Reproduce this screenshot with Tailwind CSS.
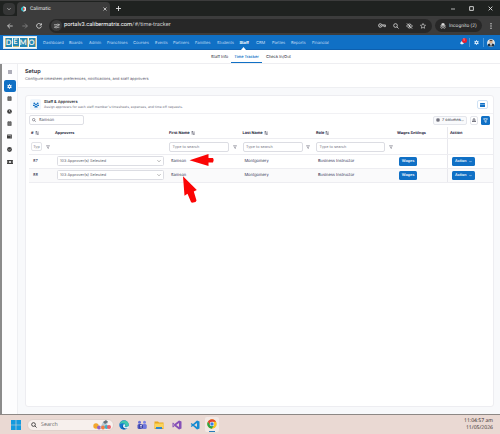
<!DOCTYPE html>
<html lang="en">
<head>
  <meta charset="UTF-8" />
  <meta name="viewport" content="width=device-width, initial-scale=1.0" />
  <title>Calimatic</title>
  <script src="https://cdn.jsdelivr.net/npm/@tailwindcss/browser@4"></script>
</head>
<body class="relative w-[500px] h-[434px] overflow-hidden flex flex-col bg-[#f8f9fb] font-[Inter,sans-serif] text-[4px] leading-none text-[#2e2e4d] whitespace-nowrap [text-rendering:geometricPrecision]">

  <!-- Shared icons -->
  <svg class="hidden">
    <symbol id="funnel" viewBox="0 0 10 10"><path d="M1 1.5h8L6.2 5v3.8L3.9 7.6V5z" fill="none" stroke="currentColor" stroke-width="1.3" stroke-linejoin="round"/></symbol>
    <symbol id="sort" viewBox="0 0 10 10"><path d="M3 9V1M1 3l2-2 2 2M7.5 1v8M5.5 7l2 2 2-2" fill="none" stroke="currentColor" stroke-width="1.3"/></symbol>
    <symbol id="chev" viewBox="0 0 10 10"><path d="M1 3l4 4 4-4" fill="none" stroke="currentColor" stroke-width="1.6"/></symbol>
    <symbol id="lens" viewBox="0 0 10 10"><path d="M6.5 6.5l2.8 2.8M7.3 4.2a3.1 3.1 0 1 1-6.2 0a3.1 3.1 0 0 1 6.2 0z" fill="none" stroke="currentColor" stroke-width="1.3"/></symbol>
    <symbol id="cal" viewBox="0 0 10 10"><path d="M2 1.200h1V.3h1v.9h2V.3h1v.9h1q1 0 1 1v6.300q0 1-1 1H2q-1 0-1-1V2.200q0-1 1-1z" fill="currentColor"/><path d="M2 3.600h6M2.500 5.500h5M2.500 7.500h5" stroke="#fff" stroke-width=".6"/></symbol>
    <symbol id="gear" viewBox="0 0 10 10"><circle cx="5" cy="5" r="2.600" fill="none" stroke="currentColor" stroke-width="2.2"/><path d="M5 .3v1.500M5 8.200v1.500M.9 2.600l1.300.8M7.800 6.600l1.300.8M.9 7.400l1.300-.8M7.800 3.400l1.300-.8" stroke="currentColor" stroke-width="2"/></symbol>
  </svg>

  <!-- Tab strip -->
  <div class="h-4 shrink-0 bg-[#1f2220] border-t border-[#3c3c3c] flex items-center text-[#e3e3e3]">
    <div class="ml-[3px] w-3 h-3 rounded-[4px] bg-[#353636] flex items-center justify-center"><svg class="w-1 h-1"><use href="#chev"/></svg></div>
    <div class="ml-[2px] mt-px w-[93px] h-[14px] rounded-t-[4px] bg-[#3c3c3c] flex items-center pl-[4px] pr-[3px]">
      <svg class="w-[5px] h-[6px]" viewBox="0 0 10 12"><path d="M5 0L0 4v4l5 4z" fill="#22b8c5"/><path d="M5 0l5 3v6l-5 3z" fill="#e8eef0"/><path d="M4 4h3v4H4z" fill="#d64545"/></svg>
      <span class="ml-[4px] text-[5px] font-[Roboto,sans-serif]">Calimatic</span>
      <svg class="ml-auto w-1 h-1" viewBox="0 0 8 8"><path d="M1 1l6 6M7 1L1 7" stroke="currentColor" stroke-width="1.500"/></svg>
    </div>
    <svg class="ml-[6px] w-[5px] h-[5px]" viewBox="0 0 8 8"><path d="M4 0v8M0 4h8" stroke="currentColor" stroke-width="1.400"/></svg>
    <div class="ml-auto mr-[7px] flex items-center gap-[14px]">
      <svg class="w-1 h-1" viewBox="0 0 8 8"><path d="M0 4h8" stroke="currentColor" stroke-width="1.500"/></svg>
      <svg class="w-[5px] h-[5px]" viewBox="0 0 8 8"><path d="M1 1h6v6H1z" fill="none" stroke="currentColor" stroke-width="1.400"/></svg>
      <svg class="w-[5px] h-[5px]" viewBox="0 0 8 8"><path d="M1 1l6 6M7 1L1 7" stroke="currentColor" stroke-width="1.400"/></svg>
    </div>
  </div>

  <!-- Address bar -->
  <div class="h-[19px] shrink-0 bg-[#3c3c3c] flex items-center text-[#dedede]">
    <svg class="ml-[7px] w-[6px] h-[6px]" viewBox="0 0 10 10"><path d="M9.500 5H1M5 1L1 5l4 4" fill="none" stroke="currentColor" stroke-width="1.300"/></svg>
    <svg class="ml-[9px] w-[6px] h-[6px] text-[#888]" viewBox="0 0 10 10"><path d="M.5 5H9M5 1l4 4-4 4" fill="none" stroke="currentColor" stroke-width="1.300"/></svg>
    <svg class="ml-[8px] w-[6px] h-[6px]" viewBox="0 0 10 10"><path d="M8.700 3A4 4 0 1 0 9 5.500M9 .5v3H6" fill="none" stroke="currentColor" stroke-width="1.400"/></svg>
    <div class="ml-[7px] w-[383px] h-[14px] rounded-full bg-[#272727] flex items-center pl-[2px] pr-[6px]">
      <div class="w-[11px] h-[11px] rounded-full bg-[#3c3c3c] flex items-center justify-center"><svg class="w-[6px] h-[6px]" viewBox="0 0 10 10"><path d="M0 3h5M9 7H5M7 3h3M0 7h2" stroke="currentColor" stroke-width="1.200"/><circle cx="6.500" cy="3" r="1.400" fill="none" stroke="currentColor"/><circle cx="3.500" cy="7" r="1.400" fill="none" stroke="currentColor"/></svg></div>
      <span class="ml-[2px] pt-px text-[5.700px] text-white font-[Roboto,sans-serif]">portalv3.calibermatrix.com<span class="text-[#c9c9c9]">/#/time-tracker</span></span>
      <div class="ml-auto flex items-center gap-[7px]">
        <svg class="w-[8px] h-[5px]" viewBox="0 0 14 8"><circle cx="4" cy="4" r="3" fill="none" stroke="currentColor" stroke-width="1.500"/><circle cx="4" cy="4" r="1" fill="currentColor"/><path d="M7 3h6v3h-2V4M9 3v3" fill="none" stroke="currentColor" stroke-width="1.300"/></svg>
        <svg class="w-[6px] h-[6px]"><use href="#lens"/></svg>
        <svg class="w-[7px] h-[6px]" viewBox="0 0 12 10"><path d="M1 5q5-7 10 0q-5 7-10 0zM1.500.5l9 9" fill="none" stroke="currentColor" stroke-width="1.300"/><circle cx="6" cy="5" r="1.600" fill="currentColor"/></svg>
        <svg class="w-[6px] h-[6px]" viewBox="0 0 10 10"><path d="M5 .7l1.300 2.800 3 .3-2.200 2 .6 3L5 7.300 2.300 8.800l.6-3L.7 3.800l3-.3z" fill="none" stroke="currentColor"/></svg>
      </div>
    </div>
    <div class="ml-[3px] w-[47px] h-[13px] rounded-full bg-[#272727] flex items-center pl-[5px]">
      <svg class="w-[6px] h-[6px]" viewBox="0 0 10 10"><path d="M2.500 4L3.300.7h3.400L7.500 4M.3 4.700h9.400" fill="currentColor" stroke="currentColor"/><circle cx="2.800" cy="7.300" r="1.600" fill="none" stroke="currentColor"/><circle cx="7.200" cy="7.300" r="1.600" fill="none" stroke="currentColor"/></svg>
      <span class="ml-[3px] pt-px text-[4.900px] font-[Roboto,sans-serif]">Incognito (2)</span>
    </div>
    <svg class="ml-[8px] w-[2px] h-[6px]" viewBox="0 0 2 6" fill="currentColor"><circle cx="1" cy=".8" r=".7"/><circle cx="1" cy="3" r=".7"/><circle cx="1" cy="5.200" r=".7"/></svg>
  </div>

  <!-- Main nav -->
  <div class="relative h-[15px] shrink-0 bg-[#1070c5] border-b border-[#0d5fae] flex items-center pl-[3px] pt-px text-[#c3def5] text-[4px]">
    <div class="w-[34px] h-[13px] bg-[#f5fafc] border border-[#d7e7ef] flex items-center justify-center gap-px text-[7.500px] font-bold text-[#f2f1e8] font-[Lato,sans-serif]">
      <span class="w-[7px] h-[9px] bg-[#2389b5] flex items-center justify-center border-l border-[#c2b476]">D</span>
      <span class="w-[6px] h-[9px] bg-[#2389b5] flex items-center justify-center border-b border-[#c2b476]">E</span>
      <span class="w-[8px] h-[9px] bg-[#2389b5] flex items-center justify-center border-r border-[#c2b476]">M</span>
      <span class="w-[7px] h-[9px] bg-[#2389b5] flex items-center justify-center border-r border-[#c2b476]">O</span>
    </div>
    <nav class="ml-[6px] flex">
      <span class="w-[26px]">Dashboard</span>
      <span class="w-[20px]">Boards</span>
      <span class="w-[18px]">Admin</span>
      <span class="w-[26px]">Franchises</span>
      <span class="w-[22px]">Courses</span>
      <span class="w-[18px]">Events</span>
      <span class="w-[22px]">Partners</span>
      <span class="w-[22px]">Families</span>
      <span class="w-[22.500px]">Students</span>
      <span class="w-[16.500px] font-bold text-white">Staff</span>
      <span class="w-[16px]">CRM</span>
      <span class="w-[19px]">Parties</span>
      <span class="w-[21px]">Reports</span>
      <span>Financial</span>
    </nav>
    <svg class="absolute left-[241px] bottom-[-1px] w-[5px] h-[3px]" viewBox="0 0 5 3"><path d="M0 3L2.500 0 5 3z" fill="#fff"/></svg>
    <div class="ml-auto mr-[5px] flex items-center">
      <div class="relative w-[6px] h-[7px]">
        <svg class="absolute left-0 top-[2px] w-1 h-1" viewBox="0 0 8 8"><path d="M0 6l1-1V3q3-5 6 0v2l1 1zM3 7h2v1H3z" fill="#e5f0fa"/></svg>
        <span class="absolute left-[1.500px] top-[-1px] w-[5px] h-[5px] rounded-full bg-[#ed1c2e] text-white text-[3.500px] flex items-center justify-center">1</span>
      </div>
      <div class="ml-[3px] w-px h-[9px] bg-[#4a96d7]"></div>
      <svg class="mx-[4px] w-[5px] h-[5px] text-[#e0effc]"><use href="#gear"/></svg>
      <div class="w-px h-[9px] bg-[#4a96d7]"></div>
      <svg class="ml-[3px] w-[8px] h-[8px] rounded-full" viewBox="0 0 16 16"><circle cx="8" cy="8" r="8" fill="#dce3e8"/><path d="M2 15V10l4-1h4l4 1v5z" fill="#26313f"/><circle cx="8" cy="5.500" r="3.500" fill="#d8ab86"/><path d="M4.500 4Q8-2 11.500 4z" fill="#544034"/><path d="M6 9h4l-2 6z" fill="#fff"/></svg>
    </div>
  </div>

  <!-- Sub nav -->
  <div class="h-[14px] shrink-0 bg-white border-b border-[#eeeef1] flex items-stretch pl-[211px] text-[4px] text-[#222230]">
    <span class="w-[20px] flex items-center">Staff Info</span>
    <span class="w-[31px] flex items-center justify-center pt-px border-b border-[#1070c5] text-[#1070c5] font-semibold text-[3.900px]">Time Tracker</span>
    <span class="ml-[4px] flex items-center">Check In/Out</span>
  </div>

  <div class="flex-1 min-h-0 flex border-l-2 border-[#8b8b8b]">
    <!-- Sidebar -->
    <div class="w-[16px] shrink-0 bg-[#fdfdfe] border-r border-[#eeeff2] flex flex-col items-center text-[#3f3f3f]">
      <div class="h-[16px] flex items-center"><svg class="w-[4px] h-[4px]" viewBox="0 0 8 8"><path d="M0 1h8M0 3h8M0 5h8M0 7h8" stroke="#777788" stroke-width="1.200"/></svg></div>
      <div class="w-[12px] h-[12px] rounded-[2px] bg-[#1070c5] text-white flex items-center justify-center"><svg class="w-[5px] h-[5px]"><use href="#gear"/></svg></div>
      <div class="h-[12.800px] flex items-center"><svg class="w-[5px] h-[5px]"><use href="#cal"/></svg></div>
      <div class="h-[12.800px] flex items-center"><svg class="w-[5px] h-[5px]" viewBox="0 0 10 10"><circle cx="5" cy="5" r="4.700" fill="currentColor"/><path d="M5 2v3l2 1.500" fill="none" stroke="#fff"/></svg></div>
      <div class="h-[12.800px] flex items-center"><svg class="w-[5px] h-[5px]"><use href="#cal"/></svg></div>
      <div class="h-[12.800px] flex items-center"><svg class="w-[5px] h-[5px]" viewBox="0 0 10 10"><rect y="1" width="10" height="8" rx="1" fill="currentColor"/><path d="M1 3h8M6 6h4" stroke="#fff" stroke-width=".8"/></svg></div>
      <div class="h-[12.800px] flex items-center"><svg class="w-[5px] h-[5px]" viewBox="0 0 10 10"><circle cx="5" cy="5" r="4.800" fill="currentColor"/><path d="M2.800 5l1.700 1.700 3-3.200" fill="none" stroke="#fff" stroke-width="1.100"/></svg></div>
      <div class="h-[12.800px] flex items-center"><svg class="w-[6px] h-[4px]" viewBox="0 0 12 8"><rect width="12" height="8" rx="1" fill="currentColor"/><circle cx="6" cy="4" r="2" fill="#fff"/><path d="M1.500 2v4M10.500 2v4" stroke="#fff" stroke-width=".7"/></svg></div>
    </div>

    <div class="flex-1 min-w-0 flex flex-col">
      <!-- Page heading -->
      <div class="h-[24px] shrink-0 bg-white border-b border-[#eeeff2] pl-[7px] pt-[5px]">
        <h1 class="text-[5.500px] leading-[7px] font-semibold text-[#1d1d2c]">Setup</h1>
        <p class="text-[3.900px] leading-[5px] text-[#646472]">Configure timesheet preferences, notifications, and staff approvers</p>
      </div>

      <!-- Card -->
      <div class="mt-[7px] ml-[7px] mr-[6px] mb-[7px] flex-1 bg-white border border-[#ededf1] rounded-[3px] flex flex-col">
        <div class="h-[18px] shrink-0 border-b border-[#f1f1f4] flex items-center pl-[4px] pr-[5px]">
          <div class="w-[11px] h-[11px] rounded-[2px] bg-[#f0f6fc] flex items-center justify-center">
            <svg class="w-[6px] h-[6px]" viewBox="0 0 12 12" fill="#1070c5"><circle cx="2.500" cy="2.800" r="1.600"/><circle cx="9.500" cy="2.800" r="1.600"/><circle cx="6" cy="4.800" r="1.900"/><path d="M0 8V5.500h3.500L4 7 2.800 8zM12 8V5.500H8.500L8 7l1.200 1zM2.500 11q0-3.500 3.500-3.500T9.500 11z"/></svg>
          </div>
          <div class="ml-[3px]">
            <h2 class="text-[3.950px] leading-[6px] font-semibold text-[#1d1d2c]">Staff &amp; Approvers</h2>
            <p class="text-[3.370px] leading-[5px] text-[#6c6c7a]">Assign approvers for each staff member's timesheets, expenses, and time off requests.</p>
          </div>
          <div class="ml-auto w-[11px] h-[9px] rounded-[2px] border border-[#cfe2f5] flex items-center justify-center"><svg class="w-[5px] h-[4px]" viewBox="0 0 10 8"><rect width="10" height="8" rx="1" fill="#1070c5"/><path d="M0 3h10" stroke="#bcdaf4"/></svg></div>
        </div>

        <div class="h-[13px] shrink-0 flex items-center pl-[3px] pr-[3px] pb-px">
          <div class="w-[55px] h-[10px] border border-[#dedfe5] rounded-[2px] flex items-center pl-[2px] text-[4px] text-[#444455]">
            <svg class="w-[4px] h-[4px] mr-[3px]"><use href="#lens"/></svg>Samson
          </div>
          <div class="ml-auto w-[34px] h-[9px] border border-[#e4e6ec] bg-[#f9fafc] rounded-[2px] flex items-center px-[2px] text-[3.900px] text-[#333344]">
            <svg class="w-[4px] h-[4px] mr-[2px] shrink-0"><use href="#gear"/></svg>7 columns
            <svg class="ml-auto w-[3px] h-[3px] shrink-0 text-[#888]"><use href="#chev"/></svg>
          </div>
          <div class="ml-[3px] w-[8px] h-[9px] border border-[#e4e6ec] rounded-[2px] flex items-center justify-center text-[#333344]"><svg class="w-[4px] h-[4px]" viewBox="0 0 8 8"><path d="M4 0v5M2 3l2 2 2-2M.5 5v2.300h7V5" fill="none" stroke="currentColor" stroke-width="1.500"/></svg></div>
          <div class="ml-[3px] w-[9px] h-[9px] bg-[#1070c5] rounded-[1.500px] flex items-center justify-center text-white"><svg class="w-[5px] h-[5px]"><use href="#funnel"/></svg></div>
        </div>

        <!-- Table -->
        <div class="ml-[3px] grid grid-cols-[26px_112px_73.500px_73.500px_82px_51px_1fr]">
          <div class="col-span-7 grid grid-cols-subgrid h-[12px] border-b border-[#ededf1] items-center font-bold text-[#22223a] text-[3.900px]">
            <span class="pl-[2px] flex items-center gap-px">#<svg class="w-1 h-1"><use href="#sort"/></svg></span>
            <span class="text-[3.800px]">Approvers</span>
            <span class="pl-[2px] flex items-center gap-px">First Name<svg class="w-1 h-1"><use href="#sort"/></svg></span>
            <span class="pl-[2px] flex items-center gap-px">Last Name<svg class="w-1 h-1"><use href="#sort"/></svg></span>
            <span class="pl-[2px] flex items-center gap-px">Role<svg class="w-1 h-1"><use href="#sort"/></svg></span>
            <span class="pl-[1px] text-[3.800px]">Wages Settings</span>
            <span class="h-full border-l border-[#e8e8ed] pl-[2px] flex items-center">Action</span>
          </div>

          <div class="col-span-7 grid grid-cols-subgrid h-[16px] border-b border-[#ededf1] items-center text-[3.800px] text-[#777785]">
            <span class="pl-[2px] flex items-center"><span class="w-[11px] h-[9px] border border-[#e2e3e8] rounded-[2px] flex items-center justify-center">Typ</span><svg class="ml-[3.500px] w-1 h-1 shrink-0"><use href="#funnel"/></svg></span>
            <span></span>
            <span class="pl-[2px] flex items-center"><span class="w-[60px] h-[10px] border border-[#dcdde3] rounded-[2px] pl-[2.500px] flex items-center">Type to search</span><svg class="ml-[3.500px] w-1 h-1"><use href="#funnel"/></svg></span>
            <span class="pl-[2px] flex items-center"><span class="w-[60px] h-[10px] border border-[#dcdde3] rounded-[2px] pl-[2.500px] flex items-center">Type to search</span><svg class="ml-[3.500px] w-1 h-1"><use href="#funnel"/></svg></span>
            <span class="pl-[2px] flex items-center"><span class="w-[69px] h-[10px] border border-[#dcdde3] rounded-[2px] pl-[2.500px] flex items-center">Type to search</span><svg class="ml-[3.500px] w-1 h-1"><use href="#funnel"/></svg></span>
            <span></span>
            <span class="h-full border-l border-[#e8e8ed]"></span>
          </div>

          <div class="col-span-7 grid grid-cols-subgrid h-[13.500px] border-b border-[#ededf1] items-center">
            <span class="pl-[4px]">87</span>
            <span class="ml-[2px] w-[107px] h-[10px] border border-[#dcdde3] rounded-[1.500px] px-[2px] flex items-center justify-between bg-white text-[3.850px] text-[#555563]">103 Approver(s) Selected<svg class="w-1 h-1 text-[#888]"><use href="#chev"/></svg></span>
            <span class="pl-[4px]">Samson</span>
            <span class="pl-[4px]">Montgomery</span>
            <span class="pl-[4px]">Business Instructor</span>
            <span class="ml-[3px] w-[18px] h-[9px] rounded-[1.500px] bg-[#1070c5] text-[3.800px] text-white font-semibold flex items-center justify-center">Wages</span>
            <span class="h-full border-l border-[#e8e8ed] pl-[4px] flex items-center"><span class="w-[23px] h-[9px] rounded-[1.500px] bg-[#1070c5] text-[3.700px] text-white font-semibold flex items-center justify-between px-[3px]">Action<svg class="w-[3px] h-[3px] shrink-0"><use href="#chev"/></svg></span></span>
          </div>

          <div class="col-span-7 grid grid-cols-subgrid h-[14px] border-b border-[#ededf1] bg-[#fafafb] items-center">
            <span class="pl-[4px]">88</span>
            <span class="ml-[2px] w-[107px] h-[10px] border border-[#dcdde3] rounded-[1.500px] px-[2px] flex items-center justify-between bg-white text-[3.850px] text-[#555563]">103 Approver(s) Selected<svg class="w-1 h-1 text-[#888]"><use href="#chev"/></svg></span>
            <span class="pl-[4px]">Samson</span>
            <span class="pl-[4px]">Montgomery</span>
            <span class="pl-[4px]">Business Instructor</span>
            <span class="ml-[3px] w-[18px] h-[9px] rounded-[1.500px] bg-[#1070c5] text-[3.800px] text-white font-semibold flex items-center justify-center">Wages</span>
            <span class="h-full border-l border-[#e8e8ed] pl-[4px] flex items-center"><span class="w-[23px] h-[9px] rounded-[1.500px] bg-[#1070c5] text-[3.700px] text-white font-semibold flex items-center justify-between px-[3px]">Action<svg class="w-[3px] h-[3px] shrink-0"><use href="#chev"/></svg></span></span>
          </div>
        </div>
      </div>
    </div>
  </div>

  <!-- Taskbar -->
  <div class="h-[20px] shrink-0 bg-[#ead9d3] border-t border-[#8d8885] flex items-center pl-[11px] pr-[7px] font-['Open_Sans',sans-serif]">
    <svg class="w-[10px] h-[10px]" viewBox="0 0 10 10"><path d="M0 0h4.700v4.700H0zM5.300 0H10v4.700H5.300zM0 5.300h4.700V10H0zM5.300 5.300H10V10H5.300z" fill="#159ade"/></svg>
    <div class="ml-[6px] w-[87px] h-[12px] rounded-full bg-[#f7f0ed] border border-[#e0d2cc] flex items-center pl-[3px] pr-[2px] text-[#666]">
      <svg class="w-[6px] h-[6px] text-[#222]"><use href="#lens"/></svg>
      <span class="ml-[4px] text-[5.300px]">Search</span>
      <svg class="ml-auto w-[18px] h-[10px]" viewBox="0 0 18 10"><circle cx="3" cy="6" r="2.700" fill="#f2a72e"/><circle cx="6" cy="7.500" r="2" fill="#9262c9"/><path d="M7 8l3-6 5-1-1 4-4 4z" fill="#b7cbd6"/><path d="M10 2l3-2 2 2-3 2z" fill="#65737c"/><circle cx="10" cy="7.500" r="2" fill="#ef7d45"/><circle cx="13.500" cy="7" r="2" fill="#3eb1cd"/><circle cx="16" cy="7" r="2" fill="#e9636a"/></svg>
    </div>
    <div class="ml-[5px] flex items-center gap-[7.700px]">
      <svg class="w-[10px] h-[10px]" viewBox="0 0 20 20"><circle cx="10" cy="10" r="9.500" fill="#1478cf"/><path d="M1 9Q4 0 12 1q8 2 7.500 10-2 4-8 2 3-4-1-6Q5 5 1 9z" fill="#41c7ae"/><path d="M9 9q-2 7 8 6-3 4-8 3-5-4 0-9z" fill="#0b4f9e"/><path d="M10 8q4 2 1 5 4 3 8-1l1 3-4 2q-7 0-8-4 0-4 2-5z" fill="#eaf4f7"/></svg>
      <svg class="w-[10px] h-[10px]" viewBox="0 0 20 20"><circle cx="5" cy="4.500" r="3" fill="#6a70d8"/><circle cx="15" cy="4.500" r="3" fill="#7c83e5"/><rect x="1" y="8" width="9" height="10" rx="3" fill="#4d55bf"/><rect x="10.500" y="8" width="9" height="10" rx="3" fill="#7178dc"/><rect x="4" y="9" width="8" height="8" rx="1" fill="#3b42a6"/><path d="M6 11h4M8 11v5" stroke="#fff" stroke-width="1.300"/></svg>
      <svg class="w-[10px] h-[10px]" viewBox="0 0 20 20"><path d="M1 3h7l2 2h9v13H1z" fill="#e8a71c"/><path d="M1 7h18v9H1z" fill="#fbd35b"/><path d="M4 14h12v4H4z" fill="#2d87cf"/></svg>
      <svg class="w-[10px] h-[10px]" viewBox="0 0 20 20"><path d="M14 1l5 2v14l-5 2-9-7-3 3-1-1V6l1-1 3 3zM14 6L8.500 10l5.500 4zM3 8v4l2-2z" fill="#8651b8" fill-rule="evenodd"/></svg>
      <svg class="w-[10px] h-[10px]" viewBox="0 0 20 20"><path d="M14 1l5 2v14l-5 2L1.500 8 3 6l11 8V6L3 14l-1.500-2z" fill="#168bd2"/></svg>
      <div class="-ml-[2px] w-[14px] h-[15px] rounded-[2px] bg-[#f3e9e5] flex flex-col items-center justify-between pt-[2px]">
        <svg class="w-[10px] h-[10px]" viewBox="0 0 20 20"><circle cx="10" cy="10" r="9.500" fill="#f9c522"/><path d="M1.800 5.300A9.500 9.500 0 0 1 18.200 5.300H10L6 12z" fill="#e34234"/><path d="M1.800 5.300l4.600 7 7 1-4 6.200A9.500 9.500 0 0 1 1.800 5.300z" fill="#2ba24c"/><circle cx="10" cy="10" r="4.500" fill="#fff"/><circle cx="10" cy="10" r="3.500" fill="#397fe6"/></svg>
        <div class="w-[6px] h-px bg-[#287cbb]"></div>
      </div>
    </div>
    <div class="ml-auto text-right text-[5.100px] leading-[7px] text-[#2b2525]">
      <div>11:04:57 am</div>
      <div>11/05/2026</div>
    </div>
  </div>

  <!-- Annotation arrows -->
  <svg class="absolute left-0 top-0 w-[500px] h-[434px] pointer-events-none" viewBox="0 0 500 434" fill="#fb0505">
    <path d="M189.500 160.200L208.500 154v4h4.500q1.500 2 0 4.500h-4.500V166z"/>
    <path d="M183 176.200L196.800 190l-3 1.500 2.700 9-1 1.500-3.500.8-1-.8-3.500-8.300-3 2z"/>
  </svg>

</body>
</html>
